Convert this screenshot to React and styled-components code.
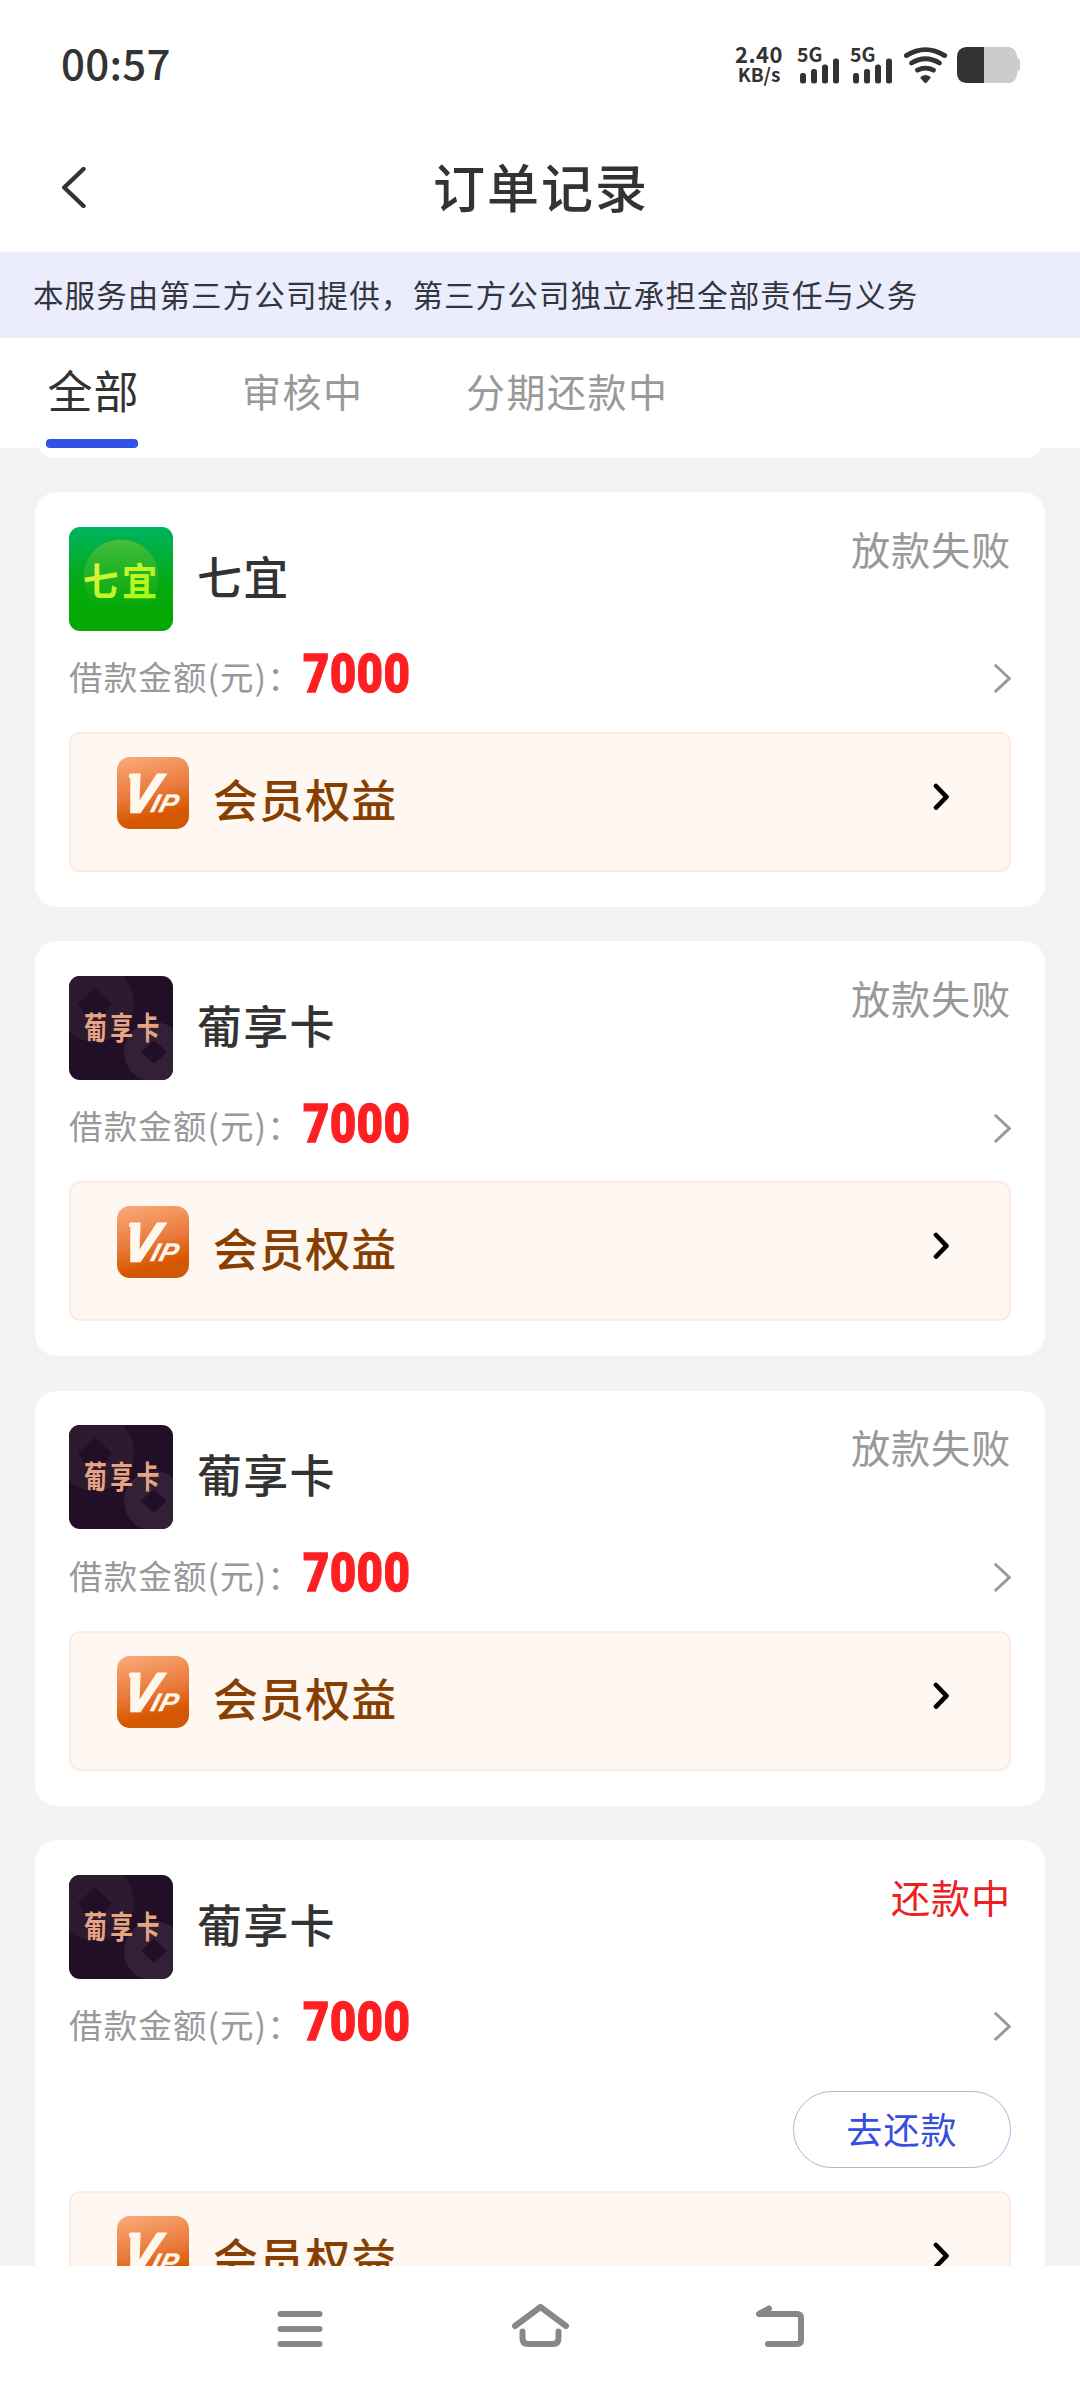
import React from "react";
import styled, { createGlobalStyle } from "styled-components";

const GlobalStyle = createGlobalStyle`
  * { box-sizing: border-box; }
  body {
    margin: 0;
    background: #f3f3f3;
    font-family: "Noto Sans CJK SC", "Noto Sans", sans-serif;
    color: #333;
  }
`;

const Screen = styled.div`
  width: 1080px;
  height: 2392px;
  display: flex;
  flex-direction: column;
  overflow: hidden;
  background: #f3f3f3;
`;

const StatusBar = styled.header`
  flex: none;
  height: 123px;
  padding: 46px 60px 0 61px;
  display: flex;
  justify-content: space-between;
  background: #fff;
`;

const Clock = styled.span`
  height: 36px;
  font-size: 42px;
  line-height: 31px;
  font-weight: 500;
  letter-spacing: 0.3px;
`;

const StatusIcons = styled.div`
  display: flex;
  height: 37px;
  margin-top: 1px;
`;

const Speed = styled.div`
  width: 50px;
  margin-right: 14px;
  display: flex;
  flex-direction: column;
  align-items: center;
  font-weight: 700;
  white-space: nowrap;
`;

const SpeedValue = styled.span`
  font-size: 22px;
  line-height: 13px;
  letter-spacing: 0.5px;
`;

const SpeedUnit = styled.span`
  margin-top: 6px;
  font-size: 19px;
  line-height: 15px;
`;

const TitleBar = styled.div`
  flex: none;
  height: 129px;
  padding: 0 61px;
  display: grid;
  grid-template-columns: 60px 1fr 60px;
  align-items: center;
  background: #fff;
`;

const Title = styled.h1`
  margin: 0 0 4px 2px;
  text-align: center;
  font-size: 52px;
  line-height: 60px;
  font-weight: 500;
  letter-spacing: 2px;
`;

const Notice = styled.div`
  flex: none;
  height: 86px;
  padding: 0 33px;
  font-size: 30.5px;
  line-height: 84px;
  letter-spacing: 1.12px;
  background: #ebedfc;
  color: #33353f;
  white-space: nowrap;
`;

const Tabs = styled.nav`
  flex: none;
  height: 110px;
  padding-left: 46px;
  display: flex;
  align-items: flex-start;
  background: #fff;
`;

const Tab = styled.span`
  height: 110px;
  padding-top: 3px;
  margin-right: ${(p) => p.$gap || 0}px;
  font-size: ${(p) => (p.$active ? 45 : 39)}px;
  line-height: 98px;
  letter-spacing: ${(p) => (p.$active ? 1 : 1.5)}px;
  text-indent: ${(p) => (p.$active ? 1.5 : 0)}px;
  color: ${(p) => (p.$active ? "#333" : "#999")};
  display: flex;
  flex-direction: column;
`;

const TabLine = styled.i`
  flex: none;
  width: 92px;
  height: 9px;
  border-radius: 4px;
  background: #3152e8;
`;

const List = styled.main`
  flex: 1;
  min-height: 0;
  padding: 0 35px;
  overflow: hidden;
  display: flex;
  flex-direction: column;
`;

const PreviousCard = styled.div`
  flex: none;
  height: 42px;
  margin: -32px 0 34px;
  border-radius: 0 0 21px 21px;
  background: #fff;
`;

const Card = styled.article`
  flex: none;
  margin-bottom: 34.5px;
  padding: 34.6px 34px 35px;
  border-radius: 22px;
  background: #fff;
`;

const CardHead = styled.div`
  height: 104px;
  display: flex;
`;

const Name = styled.h2`
  flex: 1;
  margin: 0 0 0 24px;
  font-size: 45px;
  line-height: 97px;
  font-weight: 500;
  letter-spacing: 1.2px;
`;

const State = styled.span`
  font-size: 39.2px;
  line-height: 42px;
  letter-spacing: 0.8px;
  color: ${(p) => (p.$active ? "#ec2020" : "#999")};
`;

const AmountRow = styled.div`
  height: 101.3px;
  padding-bottom: 6px;
  display: flex;
  align-items: center;
`;

const AmountLabel = styled.span`
  width: 234px;
  margin-bottom: 5px;
  font-size: 33.5px;
  line-height: 44px;
  letter-spacing: 1.15px;
  color: #999;
  white-space: nowrap;
`;

const Amount = styled.strong`
  flex: 1;
  font-family: Roboto, sans-serif;
  font-size: 54px;
  line-height: 60px;
  font-weight: 900;
  letter-spacing: 0.9px;
  color: #fe1f22;
  -webkit-text-stroke: 1.4px #fe1f22;
  transform: scaleX(0.835);
  transform-origin: left center;
  padding-bottom: 8px;
`;

const ActionRow = styled.div`
  height: 111px;
  padding-top: 11.4px;
  display: flex;
  justify-content: flex-end;
`;

const RepayButton = styled.button`
  width: 218px;
  height: 77px;
  padding: 0 0 4px;
  border: 1px solid #b3b5dd;
  border-radius: 39px;
  background: #fff;
  font: 400 36px/70px "Noto Sans CJK SC", sans-serif;
  letter-spacing: 1.2px;
  color: #354ee0;
`;

const Benefit = styled.div`
  height: 140px;
  padding: 23px 58px 0 46px;
  display: flex;
  border: 2px solid #fdebe2;
  border-radius: 11px;
  background: #fff7f2;
`;

const BenefitName = styled.span`
  flex: 1;
  margin-left: 24px;
  font-size: 45px;
  line-height: 83px;
  font-weight: 500;
  letter-spacing: 1.1px;
  color: #863f00;
`;

const BenefitArrow = styled.svg`
  margin-top: 24px;
`;

const NavBar = styled.footer`
  flex: none;
  height: 126px;
  padding: 38px 270px 0 272px;
  display: flex;
  justify-content: space-between;
  background: #fff;
`;

const Signal = () => (
  <svg width="53" height="37" viewBox="0 0 53 37" overflow="visible">
    <text x="-1" y="14.5" fontFamily="Noto Sans CJK SC, sans-serif" fontSize="19.5" fontWeight="700" fill="#333">5G</text>
    <g fill="#333">
      <rect x="2" y="26" width="6" height="10.5" rx="2.5" />
      <rect x="13" y="22" width="6" height="14.5" rx="2.5" />
      <rect x="24" y="17.5" width="6" height="19" rx="2.5" />
      <rect x="35" y="11.5" width="6" height="25" rx="2.5" />
    </g>
  </svg>
);

const Wifi = () => (
  <svg width="53" height="37" viewBox="0 0 53 37">
    <g fill="none" stroke="#333" strokeWidth="4.8" strokeLinecap="round">
      <path d="M2.3 8.6Q21.5 -3.4 40.7 8.6" />
      <path d="M7.5 16Q21.5 7.5 35.5 16" />
      <path d="M13.5 23.2Q21.5 19 29.5 23.2" />
    </g>
    <path d="M17 29.5Q21.5 26.5 26 29.5Q27 30.2 26.3 31.3L22.5 35.8Q21.5 36.7 20.5 35.8L16.7 31.3Q16 30.2 17 29.5Z" fill="#333" />
  </svg>
);

const Battery = () => (
  <svg width="63" height="37" viewBox="0 0 63 37">
    <path d="M27 0H52Q59 1 60 9L60.5 11Q63 11.5 63 14V21Q63 24 60.5 24.5L60 28Q59 35 52 36H27Z" fill="#ccc" />
    <path d="M27 0H9Q0 1 0 10V26Q0 35 9 36H27Z" fill="#333" />
  </svg>
);

const BackIcon = () => (
  <svg width="26" height="42" viewBox="0 0 26 42">
    <path d="M22.5 2L3.2 20.5L22.5 39" fill="none" stroke="#333" strokeWidth="4.4" strokeLinecap="round" strokeLinejoin="round" />
  </svg>
);

const QiyiLogo = () => (
  <svg width="104" height="104" viewBox="0 0 104 104">
    <defs>
      <linearGradient id="qiyi-bg" x1="0" y1="0" x2="0" y2="1">
        <stop offset="0" stopColor="#00b35f" />
        <stop offset="0.6" stopColor="#05a90c" />
        <stop offset="1" stopColor="#04a800" />
      </linearGradient>
      <linearGradient id="qiyi-disc" x1="0" y1="0" x2="0" y2="1">
        <stop offset="0" stopColor="#45bd3d" />
        <stop offset="0.75" stopColor="#18b014" stopOpacity="0.6" />
        <stop offset="1" stopColor="#05a905" stopOpacity="0" />
      </linearGradient>
      <linearGradient id="qiyi-text" x1="0" y1="0" x2="1" y2="1">
        <stop offset="0" stopColor="#eef04a" />
        <stop offset="1" stopColor="#9dfa0a" />
      </linearGradient>
    </defs>
    <rect width="104" height="104" rx="11" fill="url(#qiyi-bg)" />
    <circle cx="52" cy="50" r="37.5" fill="url(#qiyi-disc)" />
    <g transform="translate(14 67.5) scale(0.93 1)">
      <text x="0" y="0" fontFamily="Noto Sans CJK SC, sans-serif" fontSize="38" fontWeight="700" letterSpacing="4" fill="url(#qiyi-text)">七宜</text>
    </g>
  </svg>
);

const PuxiangLogo = () => (
  <svg width="104" height="104" viewBox="0 0 104 104">
    <defs>
      <clipPath id="pu-clip"><rect width="104" height="104" rx="11" /></clipPath>
    </defs>
    <g clipPath="url(#pu-clip)">
      <rect width="104" height="104" fill="#210f27" />
      <circle cx="26" cy="27" r="39" fill="#2e1a2f" />
      <path d="M26 12L43 28L36 38H16L9 28Z" fill="#210f27" />
      <circle cx="85" cy="76" r="30" fill="#342036" />
      <path d="M85 64L98 76L85 88L72 76Z" fill="#210f27" />
    </g>
    <g transform="translate(15 63) scale(0.75 1)">
      <text x="0" y="0" fontFamily="Noto Sans CJK SC, sans-serif" fontSize="30.5" fontWeight="700" letterSpacing="4.5" fill="#e5a583">葡享卡</text>
    </g>
  </svg>
);

const VipLogo = () => (
  <svg width="72" height="72" viewBox="0 0 72 72">
    <defs>
      <linearGradient id="vip-bg" x1="0.25" y1="0" x2="0.5" y2="1">
        <stop offset="0" stopColor="#f9a674" />
        <stop offset="0.5" stopColor="#e97b3c" />
        <stop offset="0.85" stopColor="#d75700" />
        <stop offset="1" stopColor="#cf5907" />
      </linearGradient>
    </defs>
    <rect width="72" height="72" rx="13" fill="url(#vip-bg)" />
    <path d="M12 17H19V21H12Z" fill="#fff6ec" />
    <g fontFamily="Liberation Sans, sans-serif" fontWeight="700" fontStyle="italic" fill="#fff6ec" stroke="#fff6ec">
      <g transform="translate(4.5 54.5) skewX(-9) scale(0.95 1)">
        <text x="0" y="0" fontSize="54" strokeWidth="2.6">V</text>
      </g>
      <g transform="translate(32.5 55) skewX(-16) scale(1.06 1)">
        <text x="0" y="0" fontSize="25.5" letterSpacing="0.6" strokeWidth="0.3">IP</text>
      </g>
    </g>
  </svg>
);

const GreyArrow = () => (
  <svg width="18" height="30" viewBox="0 0 18 30">
    <path d="M1.8 1.8L16.4 15.4L1.8 29" fill="none" stroke="#999" strokeWidth="2.9" />
  </svg>
);

const MenuIcon = () => (
  <svg width="56" height="48" viewBox="0 0 56 48">
    <path d="M8.5 10H47.5M8.5 25H47.5M8.5 40H47.5" stroke="#888" strokeWidth="6" strokeLinecap="round" />
  </svg>
);

const HomeIcon = () => (
  <svg width="58" height="48" viewBox="0 0 58 48">
    <path d="M3 22L28.5 3L54 22M10.5 27.5V34Q10.5 40 16 40H41Q46.5 40 46.5 34V27.5" fill="none" stroke="#888" strokeWidth="6" strokeLinecap="round" strokeLinejoin="round" />
  </svg>
);

const ReturnIcon = () => (
  <svg width="56" height="48" viewBox="0 0 56 48">
    <path d="M15 4.5L5 10H43Q47 10 47 14V36Q47 40 43 40H14" fill="none" stroke="#888" strokeWidth="6" strokeLinecap="round" strokeLinejoin="round" />
    <path d="M15 4.5L5 10H13Z" fill="#888" />
  </svg>
);

const orders = [
  { id: 1, name: "七宜", Logo: QiyiLogo, state: "放款失败", amount: "7000" },
  { id: 2, name: "葡享卡", Logo: PuxiangLogo, state: "放款失败", amount: "7000" },
  { id: 3, name: "葡享卡", Logo: PuxiangLogo, state: "放款失败", amount: "7000" },
  { id: 4, name: "葡享卡", Logo: PuxiangLogo, state: "还款中", amount: "7000", repay: true },
];

const OrderCard = ({ order }) => (
  <Card>
    <CardHead>
      <order.Logo />
      <Name>{order.name}</Name>
      <State $active={order.repay}>{order.state}</State>
    </CardHead>
    <AmountRow>
      <AmountLabel>借款金额(元)：</AmountLabel>
      <Amount>{order.amount}</Amount>
      <GreyArrow />
    </AmountRow>
    {order.repay && (
      <ActionRow>
        <RepayButton>去还款</RepayButton>
      </ActionRow>
    )}
    <Benefit>
      <VipLogo />
      <BenefitName>会员权益</BenefitName>
      <BenefitArrow width="18" height="32" viewBox="0 0 18 32">
        <path d="M3 5L13.5 15.8L3 26.6" fill="none" stroke="#000" strokeWidth="4.6" strokeLinecap="round" strokeLinejoin="round" />
      </BenefitArrow>
    </Benefit>
  </Card>
);

export default function App() {
  return (
    <Screen>
      <GlobalStyle />
      <StatusBar>
        <Clock>00:57</Clock>
        <StatusIcons>
          <Speed>
            <SpeedValue>2.40</SpeedValue>
            <SpeedUnit>KB/s</SpeedUnit>
          </Speed>
          <Signal />
          <Signal />
          <Wifi />
          <Battery />
        </StatusIcons>
      </StatusBar>
      <TitleBar>
        <BackIcon />
        <Title>订单记录</Title>
      </TitleBar>
      <Notice>本服务由第三方公司提供，第三方公司独立承担全部责任与义务</Notice>
      <Tabs>
        <Tab $active $gap={102.5}>
          全部
          <TabLine />
        </Tab>
        <Tab $gap={102.5}>审核中</Tab>
        <Tab>分期还款中</Tab>
      </Tabs>
      <List>
        <PreviousCard />
        {orders.map((order) => (
          <OrderCard key={order.id} order={order} />
        ))}
      </List>
      <NavBar>
        <MenuIcon />
        <HomeIcon />
        <ReturnIcon />
      </NavBar>
    </Screen>
  );
}
